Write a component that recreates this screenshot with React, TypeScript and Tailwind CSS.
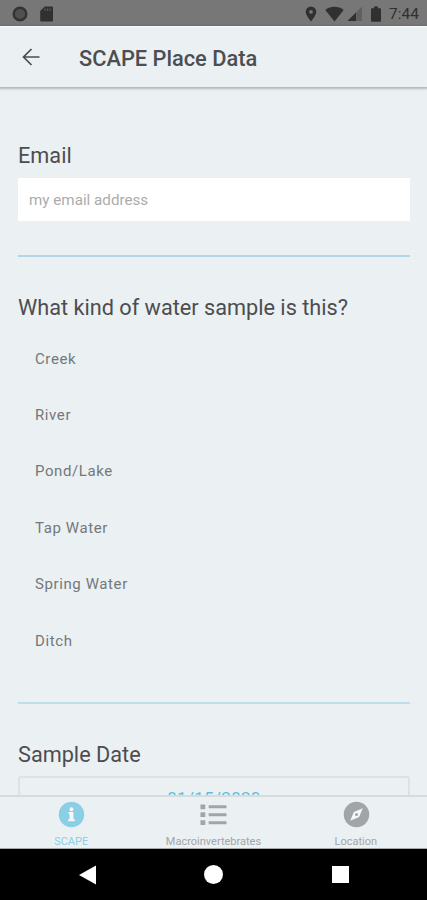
import type { ReactNode } from "react";

const sampleTypes = ["Creek", "River", "Pond/Lake", "Tap Water", "Spring Water", "Ditch"];

function StatusBar() {
  return (
    <div className="flex h-[26px] shrink-0 items-center bg-[#777777] pt-px text-[#303030]">
      <svg className="ml-3 h-4 w-4" viewBox="0 0 16 16">
        <circle cx="8" cy="8" r="6.3" fill="#505050" stroke="#333" strokeWidth="2.4" />
      </svg>
      <svg className="ml-3 h-4 w-[13px]" viewBox="0 0 13 16">
        <path d="M4.8 0.5H12a1 1 0 0 1 1 1V14.5a1 1 0 0 1-1 1H1.2a1 1 0 0 1-1-1V5z" fill="currentColor" />
        <path d="M5 2.5v2.2M7.5 2.5v2.2M10 2.5v2.2" stroke="#5c5c5c" strokeWidth="1.2" />
      </svg>
      <svg className="ml-[252px] h-4 w-3" viewBox="0 0 12 16">
        <path
          d="M6 0.5A5.3 5.3 0 0 0 0.7 5.8C0.7 9.5 6 15.5 6 15.5s5.3-6 5.3-9.7A5.3 5.3 0 0 0 6 0.5zm0 7.2a1.9 1.9 0 1 1 0-3.8 1.9 1.9 0 0 1 0 3.8z"
          fill="currentColor"
        />
      </svg>
      <svg className="ml-[8px] h-4 w-[19px]" viewBox="0 0 19 16">
        <path d="M0.3 4C5.5 -0.3 13.5 -0.3 18.7 4L9.5 15.5z" fill="currentColor" />
      </svg>
      <svg className="ml-[3px] h-4 w-[15px]" viewBox="0 0 15 16">
        <path d="M15 0.5V15H0.5z" fill="#606060" />
        <path d="M9 6.5V15H0.5z" fill="currentColor" />
      </svg>
      <svg className="ml-[9px] h-4 w-[10px]" viewBox="0 0 10 16">
        <path d="M3 0.5h4v1.7h2.2a.8.8 0 0 1 .8.8v12a.8.8 0 0 1-.8.8H.8A.8.8 0 0 1 0 15V3a.8.8 0 0 1 .8-.8H3z" fill="currentColor" />
      </svg>
      <span className="ml-[8px] text-[15.5px] leading-4">7:44</span>
    </div>
  );
}

function Header() {
  return (
    <header className="flex h-[61px] shrink-0 items-center border-t border-[#f8fafb] shadow-[0_1px_2px_1px_rgba(0,0,0,0.24)]">
      <svg className="ml-[22px] h-[18px] w-[18px]" viewBox="0 0 18 18" fill="none" stroke="#4b4d4f" strokeWidth="1.7">
        <path d="M17.5 9H2M9.5 1L1.5 9l8 8" />
      </svg>
      <h1 className="ml-[39px] pt-[3px] text-[21.8px] font-medium leading-7 text-[#4b4f52]">SCAPE Place Data</h1>
    </header>
  );
}

function Tab({ label, className, children }: { label: string; className: string; children: ReactNode }) {
  return (
    <div className={`flex flex-1 flex-col items-center ${className}`}>
      <svg className="mt-[4px] h-7 w-7" viewBox="0 0 28 28" fill="currentColor">
        {children}
      </svg>
      <span className="mt-[7px] text-[11px] leading-[13px]">{label}</span>
    </div>
  );
}

export default function App() {
  return (
    <div className="flex h-[900px] w-[427px] flex-col overflow-hidden bg-[#ebf0f3] font-['Roboto',sans-serif]">
      <StatusBar />
      <Header />

      <main className="h-[708px] shrink-0 overflow-hidden pl-[18px] pr-[17px] pt-[55px]">
        <h2 className="text-[21.7px] leading-7 text-[#4b4d4f]">Email</h2>
        <input
          type="email"
          placeholder="my email address"
          className="mt-[8px] block h-[43px] w-full bg-white px-[11px] text-[15.2px] outline-none placeholder:text-[#acacac]"
        />
        <div className="mt-[34px] h-[2px] bg-[#b3d7e7]" />

        <h2 className="mt-[37px] text-[21.7px] leading-7 text-[#4b4d4f]">What kind of water sample is this?</h2>
        <ul className="mt-[9px] pl-[17px] text-[15px] tracking-[0.6px] text-[#74787a]">
          {sampleTypes.map((type) => (
            <li key={type} className="flex h-[56.4px] items-start pt-[17.6px] leading-5">
              {type}
            </li>
          ))}
        </ul>
        <div className="mt-[33px] h-[2px] bg-[#bddfe9]" />

        <h2 className="mt-[37px] text-[21.7px] leading-7 text-[#4b4d4f]">Sample Date</h2>
        <div className="mt-[7px] flex h-12 justify-center rounded-[3px] border-2 border-[#dde2e4] pt-[8px] text-[17px] leading-6 tracking-[0.3px] text-[#65bdd6]">
          01/15/2020
        </div>
      </main>

      <nav className="flex h-[54px] shrink-0 border-t-2 border-b border-t-[#d6dbdd] border-b-[#a5a9ab]">
        <Tab label="SCAPE" className="text-[#8bcfe7]">
          <circle cx="14.5" cy="14" r="13.2" />
          <path d="M11.5 11.5h5v7.5h1.5v2h-7v-2h1.5v-5.5h-1z" fill="#f4f8fa" />
          <circle cx="14.5" cy="8.5" r="2" fill="#f4f8fa" />
        </Tab>
        <Tab label="Macroinvertebrates" className="text-[#a2a5a7]">
          <path d="M1 3.5h5v5h-5zM1 11.7h5v5h-5zM1 20h5v5h-5zM9.5 4.5H28v3H9.5zM9.5 12.7H28v3H9.5zM9.5 21H28v3H9.5z" />
        </Tab>
        <Tab label="Location" className="text-[#a2a5a7]">
          <circle cx="14.5" cy="14" r="13.2" />
          <path d="M21 7.5L17.2 16.7 8 20.5l3.8-9.2z" fill="#f4f8fa" />
          <circle cx="14.5" cy="14" r="1.6" />
        </Tab>
      </nav>

      <div className="flex h-[51px] shrink-0 items-center bg-black">
        <svg className="ml-[79px] h-5 w-[17px]" viewBox="0 0 17 20">
          <path d="M17 0.5v19L0 10z" fill="white" />
        </svg>
        <div className="ml-[108px] h-[19px] w-[19px] rounded-full bg-white" />
        <div className="ml-[109px] h-[17px] w-[17px] bg-white" />
      </div>
    </div>
  );
}
